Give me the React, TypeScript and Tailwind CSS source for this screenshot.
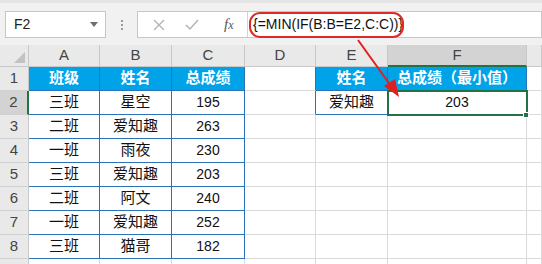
import React from "react";

// Column widths after the row-number column (A..G)
const colWidths = ["w-[71px]", "w-[72px]", "w-[73px]", "w-[71px]", "w-[72px]", "w-[139px]", "w-[15px]"];
const colLetters = ["A", "B", "C", "D", "E", "F", ""];

const rows: string[][] = [
  ["班级", "姓名", "总成绩", "", "姓名", "总成绩（最小值）", ""],
  ["三班", "星空", "195", "", "爱知趣", "203", ""],
  ["二班", "爱知趣", "263", "", "", "", ""],
  ["一班", "雨夜", "230", "", "", "", ""],
  ["三班", "爱知趣", "203", "", "", "", ""],
  ["二班", "阿文", "240", "", "", "", ""],
  ["一班", "爱知趣", "252", "", "", "", ""],
  ["三班", "猫哥", "182", "", "", "", ""],
  ["", "", "", "", "", "", ""],
];

const inTable = (r: number, c: number): boolean =>
  (r >= 0 && r <= 7 && c >= 0 && c <= 2) || (r >= 0 && r <= 1 && (c === 4 || c === 5));

const isHeadFill = (r: number, c: number): boolean => r === 0 && inTable(r, c);

const App: React.FC = () => {
  return (
    <div
      className="relative w-[542px] h-[264px] overflow-hidden bg-white"
      style={{ fontFamily: '"Liberation Sans", "Noto Sans CJK SC", sans-serif' }}
    >
      {/* formula bar */}
      <div className="h-[45px] bg-[#f1f1f1] border-t-[3px] border-[#e4e4e4] pt-[8px] flex items-start">
        <div className="ml-[5px] w-[101px] h-[27px] bg-white border border-[#c6c6c6] flex items-center justify-between pl-[8px] pr-[7px]">
          <span className="text-[14px] text-[#222]">F2</span>
          <span className="w-0 h-0 border-l-[4px] border-r-[4px] border-t-[5px] border-l-transparent border-r-transparent border-t-[#6f6f6f]" />
        </div>
        <div className="w-[31px] h-[27px] flex flex-col items-center justify-center gap-[2px]">
          <span className="w-[2px] h-[2px] bg-[#9a9a9a]" />
          <span className="w-[2px] h-[2px] bg-[#9a9a9a]" />
          <span className="w-[2px] h-[2px] bg-[#9a9a9a]" />
        </div>
        <div className="flex-1 h-[27px] bg-white border border-[#c6c6c6] flex items-center">
          <div className="w-[110px] h-full flex items-center border-r border-[#d4d4d4]">
            <svg width="12" height="12" viewBox="0 0 12 12" className="ml-[15px]">
              <path d="M1 1L11 11M11 1L1 11" stroke="#b4b4b4" strokeWidth="1.4" />
            </svg>
            <svg width="14" height="12" viewBox="0 0 14 12" className="ml-[20px]">
              <path d="M1 6L5 10L13 1" stroke="#b4b4b4" strokeWidth="1.5" fill="none" />
            </svg>
            <span
              className="ml-[25px] text-[15px] italic text-[#555]"
              style={{ fontFamily: '"Liberation Serif", serif' }}
            >
              f<span className="text-[12px]">x</span>
            </span>
          </div>
          <span className="ml-[5px] text-[14px] text-[#111]">{"{=MIN(IF(B:B=E2,C:C))}"}</span>
        </div>
      </div>

      {/* column headers */}
      <div className="flex h-[22px] bg-[#e9e9e9]">
        <div className="w-[29px] h-full border-r border-b border-[#c8c8c8] flex items-end justify-end pr-[3px] pb-[3px]">
          <svg width="11" height="11" viewBox="0 0 11 11">
            <path d="M11 0L11 11L0 11Z" fill="#c2c2c2" />
          </svg>
        </div>
        {colLetters.map((l, c) => (
          <div
            key={c}
            className={`${colWidths[c]} h-full flex items-center justify-center text-[15px] text-[#444] border-r border-[#c8c8c8] ${
              c === 5 ? "bg-[#d3d3d3] border-b-2 border-b-[#217346]" : "border-b border-b-[#c8c8c8]"
            }`}
          >
            {l}
          </div>
        ))}
      </div>

      {/* rows */}
      {rows.map((row, r) => (
        <div key={r} className="flex h-[24px]">
          <div
            className={`w-[29px] h-full flex items-center justify-center text-[15px] text-[#444] border-b border-[#d0d0d0] ${
              r === 1 ? "bg-[#d3d3d3] border-r-2 border-r-[#217346]" : "bg-[#e9e9e9] border-r border-r-[#c8c8c8]"
            }`}
          >
            {r + 1}
          </div>
          {row.map((v, c) => {
            const rightBlue = inTable(r, c) || inTable(r, c + 1);
            const bottomBlue = inTable(r, c) || inTable(r + 1, c);
            const fill = isHeadFill(r, c);
            const numeric = /^\d+$/.test(v);
            return (
              <div
                key={c}
                className={`${colWidths[c]} h-full border-r border-b flex items-center justify-center whitespace-nowrap ${
                  rightBlue ? "border-r-[#2a72ba]" : "border-r-[#dadada]"
                } ${bottomBlue ? "border-b-[#2a72ba]" : "border-b-[#dadada]"} ${
                  fill ? "bg-[#00a2e8] text-white font-bold text-[15px]" : "text-[#111]"
                } ${numeric ? "text-[14px]" : "text-[15px]"}`}
              >
                {v}
              </div>
            );
          })}
        </div>
      ))}

      {/* F2 selection */}
      <div className="absolute left-[387px] top-[90px] w-[141px] h-[26px] border-2 border-[#217346]" />
      <div className="absolute left-[523px] top-[112px] w-[6px] h-[6px] bg-[#217346] border border-white" />

      {/* annotation: red oval + arrow */}
      <div className="absolute left-[249px] top-[12px] w-[155px] h-[26px] border-2 border-[#dc2a2a] rounded-[11px]" />
      <svg className="absolute left-0 top-0" width="542" height="264" viewBox="0 0 542 264">
        <line x1="358" y1="40" x2="391" y2="86" stroke="#e02020" strokeWidth="2" />
        <path d="M399 97L384 86L395 79Z" fill="#e02020" />
      </svg>
    </div>
  );
};

export default App;
